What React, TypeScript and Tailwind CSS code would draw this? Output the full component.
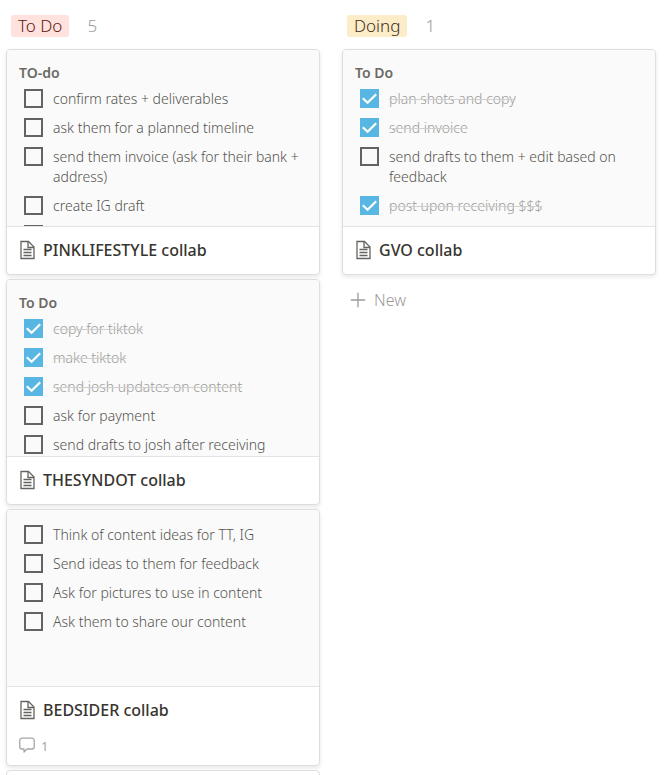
import React, { useState } from "react";

type Task = { text: string; done?: boolean };
type CardData = {
  id: string;
  heading?: string;
  tasks: Task[];
  title: string;
  comments?: number;
};

const todoCards: CardData[] = [
  {
    id: "pink",
    heading: "TO-do",
    title: "PINKLIFESTYLE collab",
    tasks: [
      { text: "confirm rates + deliverables" },
      { text: "ask them for a planned timeline" },
      { text: "send them invoice (ask for their bank + address)" },
      { text: "create IG draft" },
      { text: "" },
    ],
  },
  {
    id: "syndot",
    heading: "To Do",
    title: "THESYNDOT collab",
    tasks: [
      { text: "copy for tiktok", done: true },
      { text: "make tiktok", done: true },
      { text: "send josh updates on content", done: true },
      { text: "ask for payment" },
      { text: "send drafts to josh after receiving" },
    ],
  },
  {
    id: "bedsider",
    title: "BEDSIDER collab",
    comments: 1,
    tasks: [
      { text: "Think of content ideas for TT, IG" },
      { text: "Send ideas to them for feedback" },
      { text: "Ask for pictures to use in content" },
      { text: "Ask them to share our content" },
    ],
  },
];

const doingCards: CardData[] = [
  {
    id: "gvo",
    heading: "To Do",
    title: "GVO collab",
    tasks: [
      { text: "plan shots and copy", done: true },
      { text: "send invoice", done: true },
      { text: "send drafts to them + edit based on feedback" },
      { text: "post upon receiving $$$", done: true },
    ],
  },
];

function PageIcon() {
  return (
    <svg className="h-5 w-4 shrink-0" viewBox="0 0 16 20" fill="none" stroke="#64635f" strokeWidth="1.3" aria-hidden="true">
      <path d="M2 1.5H9.5L15 7V18.5H2Z" />
      <path d="M9 1.5V7.5H15" />
      <path d="M4.5 9.5H12.5M4.5 12.5H12.5M4.5 15.5H12.5" />
    </svg>
  );
}

function CommentIcon() {
  return (
    <svg className="h-4 w-4 shrink-0" viewBox="0 0 16 16" fill="none" stroke="#a6a6a4" strokeWidth="1.3" strokeLinejoin="round" aria-hidden="true">
      <path d="M3 1.2H13A2.2 2.2 0 0 1 15.2 3.4V9.8A2.2 2.2 0 0 1 13 12H8L5 15V12H3A2.2 2.2 0 0 1 .8 9.8V3.4A2.2 2.2 0 0 1 3 1.2Z" />
    </svg>
  );
}

function TaskRow({ task, id }: { task: Task; id: string }) {
  const [done, setDone] = useState(!!task.done);
  return (
    <li className="flex items-start gap-[10px]">
      <span className="grid shrink-0">
        <input
          id={id}
          type="checkbox"
          aria-label={task.text ? undefined : "Untitled task"}
          checked={done}
          onChange={() => setDone(!done)}
          className="col-start-1 row-start-1 size-[19px] appearance-none border-2 border-[#64635f] checked:border-[#57b7e2] checked:bg-[#57b7e2]"
        />
        {done && (
          <svg className="pointer-events-none col-start-1 row-start-1 size-[19px]" viewBox="0 0 19 19" fill="none" stroke="white" strokeWidth="2.2" aria-hidden="true">
            <path d="M2.8 9.2L7.6 13.8L16.2 5.2" />
          </svg>
        )}
      </span>
      {task.text && (
        <label
          htmlFor={id}
          className={
            done
              ? "text-sm leading-5 font-light text-[#9b9b99] line-through decoration-[#cfcfce] decoration-1"
              : "text-sm leading-5 font-light text-[#55544f]"
          }
        >
          {task.text}
        </label>
      )}
    </li>
  );
}

function Card({ card }: { card: CardData }) {
  return (
    <article className="overflow-hidden rounded-[4px] border border-[#dededd] bg-white shadow-[0_2px_4px_rgba(15,15,15,0.1)]">
      <div className="h-[177px] overflow-hidden border-b border-[#e4e4e3] bg-[#fafafa] px-3 pt-[15px]">
        {card.heading && (
          <h3 className="mb-2 text-sm leading-4 font-semibold text-[#6b6a66]">{card.heading}</h3>
        )}
        <ul className="flex flex-col gap-[9px] pl-[5px]">
          {card.tasks.map((t, i) => (
            <TaskRow key={i} task={t} id={`${card.id}-${i}`} />
          ))}
        </ul>
      </div>
      <div className="flex h-[47px] items-center gap-2 px-3 pb-[2px]">
        <PageIcon />
        <h2 className="text-base font-medium text-[#37352f]">{card.title}</h2>
      </div>
      {card.comments && (
        <div className="flex h-[31px] items-start gap-[6px] px-3 pt-[3px] text-[13px] leading-[18px] text-[#a6a6a4]">
          <CommentIcon />
          <span>{card.comments}</span>
        </div>
      )}
    </article>
  );
}

function ColumnHeader({ name, count, tone }: { name: string; count: number; tone: string }) {
  return (
    <header className="flex h-[49px] items-start gap-[18px] pt-[15px] pl-[5px] text-[17px] leading-[22px] font-light">
      <h1 className={`rounded-[3px] px-[7px] ${tone}`}>{name}</h1>
      <span className="text-[#9b9b99]">{count}</span>
    </header>
  );
}

export default function App() {
  return (
    <main className="grid h-screen grid-cols-2 gap-[22px] overflow-hidden bg-white pr-2 pl-[6px] font-['Noto_Sans','Open_Sans',sans-serif]">
      <section>
        <ColumnHeader name="To Do" count={5} tone="bg-[#ffe2dd] text-[#5d1715]" />
        <div className="flex flex-col gap-1">
          {todoCards.map((c) => (
            <Card key={c.id} card={c} />
          ))}
          <div className="h-[47px] rounded-[4px] border border-[#dededd] bg-white" />
        </div>
      </section>
      <section>
        <ColumnHeader name="Doing" count={1} tone="bg-[#fdecc8] text-[#402c1b]" />
        <div className="flex flex-col gap-1">
          {doingCards.map((c) => (
            <Card key={c.id} card={c} />
          ))}
        </div>
        <button type="button" className="mt-[14px] flex items-center gap-2 pl-2 text-base leading-[22px] font-light text-[#9b9b99]">
          <svg className="size-4" viewBox="0 0 16 16" fill="none" stroke="currentColor" strokeWidth="1.3" aria-hidden="true">
            <path d="M8 .8V15.2M.8 8H15.2" />
          </svg>
          New
        </button>
      </section>
    </main>
  );
}
